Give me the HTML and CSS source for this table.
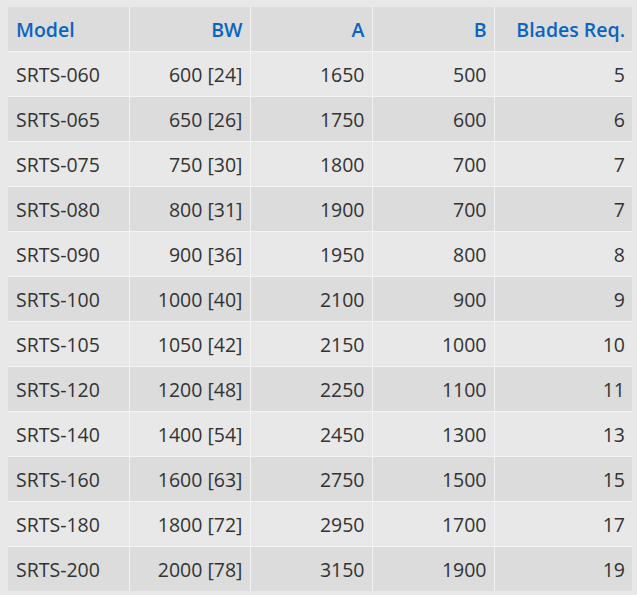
FILE: index.html
```html
<!DOCTYPE html>
<html>
<head>
<meta charset="utf-8">
<link rel="stylesheet" href="styles.css">
</head>
<body>
<table class="spec">
<colgroup>
<col class="c1"><col class="c2"><col class="c3"><col class="c4"><col class="c5">
</colgroup>
<thead>
<tr><th class="left">Model</th><th>BW</th><th>A</th><th>B</th><th>Blades Req.</th></tr>
</thead>
<tbody>
<tr><td class="left">SRTS-060</td><td>600 [24]</td><td>1650</td><td>500</td><td>5</td></tr>
<tr><td class="left">SRTS-065</td><td>650 [26]</td><td>1750</td><td>600</td><td>6</td></tr>
<tr><td class="left">SRTS-075</td><td>750 [30]</td><td>1800</td><td>700</td><td>7</td></tr>
<tr><td class="left">SRTS-080</td><td>800 [31]</td><td>1900</td><td>700</td><td>7</td></tr>
<tr><td class="left">SRTS-090</td><td>900 [36]</td><td>1950</td><td>800</td><td>8</td></tr>
<tr><td class="left">SRTS-100</td><td>1000 [40]</td><td>2100</td><td>900</td><td>9</td></tr>
<tr><td class="left">SRTS-105</td><td>1050 [42]</td><td>2150</td><td>1000</td><td>10</td></tr>
<tr><td class="left">SRTS-120</td><td>1200 [48]</td><td>2250</td><td>1100</td><td>11</td></tr>
<tr><td class="left">SRTS-140</td><td>1400 [54]</td><td>2450</td><td>1300</td><td>13</td></tr>
<tr><td class="left">SRTS-160</td><td>1600 [63]</td><td>2750</td><td>1500</td><td>15</td></tr>
<tr><td class="left">SRTS-180</td><td>1800 [72]</td><td>2950</td><td>1700</td><td>17</td></tr>
<tr><td class="left">SRTS-200</td><td>2000 [78]</td><td>3150</td><td>1900</td><td>19</td></tr>
</tbody>
</table>
</body>
</html>
```
FILE: styles.css
```css
html, body {
  background: #e8e8e8;
}
body {
  margin: 7px 5px 0 8px;
  font-family: "Open Sans", "Liberation Sans", sans-serif;
  font-size: 19.5px;
  color: #333333;
}
.spec {
  border-collapse: collapse;
  table-layout: fixed;
  width: 624px;
}
.c1 { width: 121px; }
.c2 { width: 121px; }
.c3 { width: 122px; }
.c4 { width: 122px; }
.c5 { width: 138px; }
.spec th, .spec td {
  height: 45px;
  box-sizing: border-box;
  padding: 2px 7px 0 8px;
  line-height: 26px;
  text-align: right;
  vertical-align: middle;
  border-left: 1px solid #f3f3f3;
  border-top: 1px solid #f3f3f3;
  white-space: nowrap;
}
.spec tr > :first-child { border-left: none; }
.spec thead th { border-top: none; height: 44px; }
.spec th {
  color: #0a64c3;
  font-weight: 600;
}
.spec .left { text-align: left; }
.spec thead tr { background: #dcdcdc; }
.spec tbody tr:nth-child(odd) { background: #e8e8e8; }
.spec tbody tr:nth-child(even) { background: #dcdcdc; }
```
